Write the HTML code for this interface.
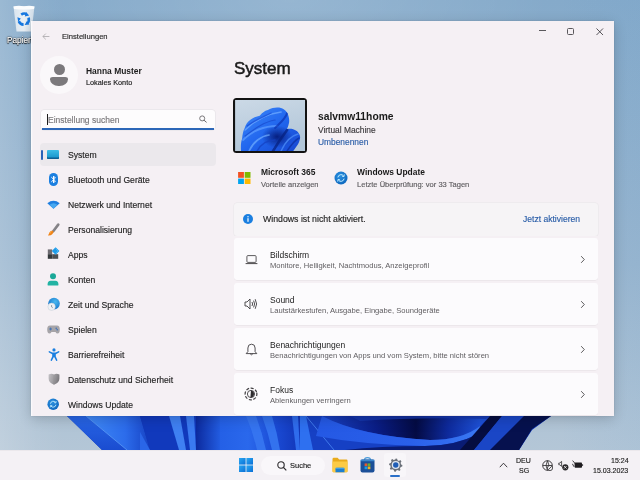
<!DOCTYPE html>
<html><head><meta charset="utf-8">
<style>
html,body{margin:0;padding:0;width:640px;height:480px;overflow:hidden;}
div.a{will-change:transform;-webkit-text-stroke:0.15px currentColor;}
body{position:relative;font-family:"Liberation Sans",sans-serif;color:#1c1c1c;background:#9ab6cf;}
.a{position:absolute;white-space:nowrap;line-height:1;}
#wall{position:absolute;left:0;top:0;width:640px;height:480px;}
#win{position:absolute;left:31px;top:21px;width:583px;height:395px;background:#f5f0f4;box-shadow:0 3px 12px rgba(0,0,0,0.18), 0 0 2px rgba(0,0,0,0.12), inset 1.2px 0 0 #fbfafc;overflow:hidden;}
.nav{position:absolute;left:0;font-size:8.6px;color:#1f1f1f;}
.card{position:absolute;left:203px;width:364px;height:42px;background:#fcfbfd;border-radius:3px;box-shadow:0 0.6px 0 rgba(0,0,0,0.07);}
.ct{position:absolute;left:36px;font-size:8.5px;color:#1c1c1c;line-height:1;white-space:nowrap;}
.cs{position:absolute;left:36px;font-size:7.6px;color:#5f5d60;line-height:1;white-space:nowrap;}
.chev{position:absolute;left:346.3px;top:17px;}
#tb{position:absolute;left:0;top:450px;width:640px;height:30px;background:#f4f1f5;border-top:1px solid #ebe8ec;box-sizing:border-box;}
</style></head>
<body>
<svg id="wall" width="640" height="480" viewBox="0 0 640 480">
  <defs>
    <linearGradient id="wbg" x1="0" y1="0" x2="0" y2="1">
      <stop offset="0" stop-color="#85aaca"/>
      <stop offset="0.55" stop-color="#9ab6cf"/>
      <stop offset="1" stop-color="#b8c9d8"/>
    </linearGradient>
    <linearGradient id="gA" x1="0" y1="0" x2="0" y2="1"><stop offset="0" stop-color="#2866e6"/><stop offset="1" stop-color="#1a4cd0"/></linearGradient>
    <linearGradient id="gB" gradientUnits="userSpaceOnUse" x1="88" y1="0" x2="150" y2="0"><stop offset="0" stop-color="#3f88f5"/><stop offset="0.6" stop-color="#2c6ceb"/><stop offset="1" stop-color="#1743c4"/></linearGradient>
    <linearGradient id="gE" gradientUnits="userSpaceOnUse" x1="220" y1="0" x2="300" y2="0"><stop offset="0" stop-color="#2460e6"/><stop offset="0.35" stop-color="#2a68ec"/><stop offset="0.7" stop-color="#1a4ad4"/><stop offset="1" stop-color="#1236b8"/></linearGradient>
    <linearGradient id="gG" x1="0" y1="0" x2="0" y2="1"><stop offset="0" stop-color="#081a7e"/><stop offset="0.5" stop-color="#0f2fb0"/><stop offset="1" stop-color="#1a46d0"/></linearGradient>
  </defs>
  <rect width="640" height="480" fill="url(#wbg)"/>
  <defs><radialGradient id="wsp" gradientUnits="userSpaceOnUse" cx="290" cy="0" r="260" gradientTransform="translate(290 0) scale(1 0.4) translate(-290 0)"><stop offset="0" stop-color="#ffffff" stop-opacity="0.14"/><stop offset="1" stop-color="#ffffff" stop-opacity="0"/></radialGradient>
  <linearGradient id="wrt" gradientUnits="userSpaceOnUse" x1="560" y1="0" x2="640" y2="0"><stop offset="0" stop-color="#4a8fd0" stop-opacity="0"/><stop offset="1" stop-color="#5a9ad0" stop-opacity="0.08"/></linearGradient></defs>
  <rect width="640" height="480" fill="url(#wsp)"/>
  <rect x="560" width="80" height="450" fill="url(#wrt)"/>
  <defs><linearGradient id="gL" x1="0" y1="0" x2="1" y2="0"><stop offset="0" stop-color="#ffffff" stop-opacity="0.18"/><stop offset="0.06" stop-color="#ffffff" stop-opacity="0.05"/><stop offset="0.1" stop-color="#ffffff" stop-opacity="0"/></linearGradient></defs><rect x="0" y="0" width="640" height="450" fill="url(#gL)"/>
  <path d="M67 416 L551 416 L532 430 L519 450 L102 450 Z" fill="#1238b8"/>
  <path d="M67 416 L86 416 L127 450 L102 450 Z" fill="url(#gA)"/>
  <path d="M86 416 L140 416 L150 450 L127 450 Z" fill="url(#gB)"/>
  <path d="M86 416 L127 450" stroke="#5a9cf8" stroke-width="0.8"/>
  <path d="M140 416 L220 416 L220 450 L150 450 Z" fill="#1139bc"/>
  <path d="M140 432 L150 450 L140 450 Z" fill="#2a66e8"/>
  <path d="M169 416 L180 416 L186 450 L179 450 Z" fill="#3f80f2"/>
  <path d="M186 416 L194 416 L196 450 L190 450 Z" fill="#3a7af0"/>
  <defs><linearGradient id="g200" gradientUnits="userSpaceOnUse" x1="196" y1="0" x2="222" y2="0"><stop offset="0" stop-color="#0c2a9e"/><stop offset="1" stop-color="#2460e6"/></linearGradient></defs><rect x="196" y="416" width="24" height="34" fill="url(#g200)"/>
  <rect x="220" y="416" width="80" height="34" fill="url(#gE)"/>
  <path d="M246 416 L256 416 Q262 432 266 450 L257 450 Q253 432 246 416 Z" fill="#3574f0"/>
  <path d="M262 416 L272 416 Q277 432 280 450 L272 450 Q268 432 262 416 Z" fill="#3372ee"/>
  <path d="M292 416 L298 416 L300 450 L296 450 Z" fill="#2f6cec"/>
  <defs>
    <linearGradient id="gN" gradientUnits="userSpaceOnUse" x1="320" y1="0" x2="480" y2="0"><stop offset="0" stop-color="#1a44c8"/><stop offset="0.35" stop-color="#0a1d86"/><stop offset="0.6" stop-color="#040b44"/><stop offset="0.8" stop-color="#0e2a9c"/><stop offset="1" stop-color="#1d50d6"/></linearGradient>
    <linearGradient id="gBand" gradientUnits="userSpaceOnUse" x1="310" y1="0" x2="480" y2="0"><stop offset="0" stop-color="#2458e4"/><stop offset="0.6" stop-color="#2a60ea"/><stop offset="1" stop-color="#3a78f2"/></linearGradient>
  </defs>
  <path d="M300 416 L551 416 L532 429 L519 450 L300 450 Z" fill="#1640c4"/>
  <path d="M300 416 L306 416 L313 450 L300 450 Z" fill="#2e70f0"/>
  <path d="M306 416 L334 450" stroke="#4a88f4" stroke-width="0.8"/>
  <path d="M322 416 Q360 436 430 440 Q462 440 480 426 L490 416 Z" fill="url(#gN)"/><path d="M350 416 L490 416 L486 419 Q420 417 360 421 Z" fill="#1638b0" opacity="0.8"/>
  <path d="M322 416 Q360 436 430 440 Q462 440 480 426 L478 434 Q455 446 425 446 Q365 445 316 436 Z" fill="url(#gBand)"/>
  <path d="M345 450 Q380 446 425 446 Q455 446 478 434 L462 450 Z" fill="#0a1c74"/>
  <path d="M460 450 L490 416 L502 416 L474 450 Z" fill="#050d40"/>
  <path d="M474 450 L502 416 L524 416 L490 450 Z" fill="#1a46c6"/>
  <path d="M490 450 L524 416 L551 416 L532 429 L519 450 Z" fill="#06114e"/>
</svg>

<!-- recycle bin -->
<svg class="a" style="left:12px;top:5px" width="24" height="28" viewBox="0 0 24 28">
  <defs><linearGradient id="rb" x1="0" y1="0" x2="1" y2="0"><stop offset="0" stop-color="#dfe8f0"/><stop offset="0.5" stop-color="#f2f6f9"/><stop offset="1" stop-color="#d5e0ea"/></linearGradient></defs>
  <path d="M1.5 1.5 L22.5 1.5 L19.5 26.5 L4.5 26.5 Z" fill="url(#rb)" opacity="0.92"/>
  <path d="M1.5 1.5 Q6 0 12 1.2 Q18 0 22.5 1.5 L22 4 Q12 5 2 4 Z" fill="#fbfcfd"/>
  <g fill="none" stroke="#1678e0" stroke-width="2.6">
    <path d="M9.2 9.6 Q12 7.6 14.6 9.2"/>
    <path d="M16.6 12.6 Q17.6 16.2 15.2 18.4"/>
    <path d="M11.6 19.6 Q8 19.4 6.8 16.2"/>
  </g>
  <path d="M14 7 L17.2 10.6 L12.8 11.4 Z M17.4 19.6 L12.6 20 L14.8 16.2 Z M5.4 12.2 L8.8 13.6 L6.2 17 Z" fill="#1678e0"/>
</svg>
<div class="a" style="left:6.5px;top:36.5px;font-size:8.2px;color:#fff;text-shadow:0 0 1px #000,0 1px 1px #000,0 0 2px rgba(0,0,0,0.8)">Papierkorb</div>

<div id="win">
  <!-- title bar -->
  <svg class="a" style="left:11px;top:11.5px" width="8" height="7" viewBox="0 0 8 7"><path d="M3.8 0.6 L0.9 3.5 L3.8 6.4 M0.9 3.5 L7.4 3.5" fill="none" stroke="#a9a7ab" stroke-width="0.8"/></svg>
  <div class="a" style="left:30.8px;top:12.2px;font-size:7.6px;color:#2a2a2a">Einstellungen</div>
  <div class="a" style="left:507.5px;top:8.8px;width:7px;height:0.9px;background:#5a585c"></div>
  <div class="a" style="left:536px;top:7px;width:5.4px;height:5.4px;border:0.9px solid #5a585c;border-radius:1.5px"></div>
  <svg class="a" style="left:565px;top:7px" width="7.5" height="7.5" viewBox="0 0 8 8"><path d="M0.5 0.5 L7.5 7.5 M7.5 0.5 L0.5 7.5" stroke="#3a383c" stroke-width="0.9"/></svg>

  <!-- profile -->
  <div class="a" style="left:9px;top:35px;width:38px;height:38px;border-radius:50%;background:#faf8fa"></div>
  <div class="a" style="left:23px;top:43.2px;width:11px;height:11px;border-radius:50%;background:#7b797c"></div>
  <div class="a" style="left:19.4px;top:56.1px;width:17.8px;height:8.7px;border-radius:3px 3px 9px 9px / 2.5px 2.5px 7px 7px;background:#7b797c"></div>
  <div class="a" style="left:55px;top:46.3px;font-size:8.45px;font-weight:bold;color:#1c1c1c;-webkit-text-stroke:0">Hanna Muster</div>
  <div class="a" style="left:55px;top:57.8px;font-size:7.3px;color:#1c1c1c">Lokales Konto</div>

  <!-- search -->
  <div class="a" style="left:10px;top:88.5px;width:174px;height:20px;background:#fdfcfd;border-radius:3px;box-shadow:0 0 0 0.5px #e2dfe3;"></div>
  <div class="a" style="left:11px;top:106.8px;width:172px;height:1.5px;background:#2c67b8"></div>
  <div class="a" style="left:15.8px;top:92.6px;width:1px;height:10.6px;background:#1c1c1c"></div>
  <div class="a" style="left:17px;top:94.8px;font-size:8.5px;color:#7a787b">Einstellung suchen</div>
  <svg class="a" style="left:167px;top:93px" width="10" height="10" viewBox="0 0 10 10"><circle cx="4.2" cy="4.4" r="2.5" fill="none" stroke="#6a686b" stroke-width="0.9"/><path d="M6 6.2 L8.6 8.4" stroke="#6a686b" stroke-width="1"/></svg>

  <!-- nav selected -->
  <div class="a" style="left:8.5px;top:121.5px;width:176px;height:23px;background:#ebe8ec;border-radius:4px"></div>
  <div class="a" style="left:9.5px;top:129px;width:2px;height:10px;background:#2a62b8;border-radius:1px"></div>

  <!-- nav icons -->
  <div class="a" style="left:16.2px;top:129.4px;width:11.8px;height:8.8px;background:linear-gradient(#3cbce6,#1590c8);border-radius:1px;box-shadow:inset 0 -1.4px 0 #0d5f94"></div>
  <svg class="a" style="left:17.5px;top:152px" width="9" height="13" viewBox="0 0 9 13"><rect x="0" y="0" width="9" height="13" rx="4.5" fill="#1b7fe0"/><path d="M2.3 4.1 L6.4 8 L4.5 9.9 L4.5 3.1 L6.4 5 L2.3 8.9" fill="none" stroke="#fff" stroke-width="1"/></svg>
  <svg class="a" style="left:16px;top:179px" width="13" height="9" viewBox="0 0 13 9"><path d="M0.3 3.2 Q6.5 -1.6 12.7 3.2 L6.5 8.8 Z" fill="#1f7fe0"/><path d="M2.6 4.8 Q6.5 1.8 10.4 4.8 L6.5 8.8 Z" fill="#47a8f0"/></svg>
  <svg class="a" style="left:16px;top:202px" width="13" height="13" viewBox="0 0 13 13"><defs><linearGradient id="bh" x1="0" y1="0" x2="1" y2="1"><stop offset="0" stop-color="#9a989c"/><stop offset="1" stop-color="#6f6d71"/></linearGradient></defs><path d="M11.2 1.6 L6.2 8.2" stroke="url(#bh)" stroke-width="2.6" stroke-linecap="round"/><path d="M5.2 7.4 Q3.2 7.6 2.4 9.6 Q1.9 11 1 12.4 Q3.8 12.6 5.2 11.2 Q6.6 9.8 6.6 8.6 Z" fill="#f08418"/><path d="M4.6 8.2 Q3.4 9 3 10.6" stroke="#ffb04a" stroke-width="0.8" fill="none"/></svg>
  <svg class="a" style="left:16px;top:226px" width="13" height="12" viewBox="0 0 13 12"><rect x="0.8" y="2.4" width="4.4" height="4.8" fill="#6e6c72"/><rect x="0.8" y="7.2" width="4.4" height="4.6" fill="#34383b"/><rect x="5.2" y="7.2" width="6" height="4.6" fill="#4b4f53"/><path d="M8.6 0.2 L12.4 4 L8.6 7.8 L4.8 4 Z" fill="#1d9be8"/><path d="M8.6 1.6 L11 4 L8.6 6.4" fill="none" stroke="#5cc8ff" stroke-width="0.6"/></svg>
  <svg class="a" style="left:16px;top:251px" width="12" height="14" viewBox="0 0 12 14"><circle cx="6" cy="4.3" r="3" fill="#1aa898"/><path d="M1.2 13.6 Q0.6 13.6 0.6 12.4 Q0.6 8.8 3.6 8.8 L8.4 8.8 Q11.4 8.8 11.4 12.4 Q11.4 13.6 10.8 13.6 Z" fill="#22b3a3"/></svg>
  <svg class="a" style="left:16px;top:276px" width="13" height="14" viewBox="0 0 13 14"><defs><radialGradient id="gz" cx="0.6" cy="0.35" r="0.7"><stop offset="0" stop-color="#49b8f0"/><stop offset="1" stop-color="#1672c8"/></radialGradient></defs><circle cx="7" cy="6.6" r="5.8" fill="url(#gz)"/><circle cx="4.6" cy="9.8" r="3.7" fill="#eef1f5" stroke="#c5ccd6" stroke-width="0.5"/><path d="M4.6 8 L4.6 10 L5.8 10.8" fill="none" stroke="#5a6878" stroke-width="0.6"/></svg>
  <svg class="a" style="left:15.5px;top:303.5px" width="13" height="9" viewBox="0 0 13 9"><path d="M3 0.5 L10 0.5 Q12.8 0.5 12.8 4.5 Q12.8 8.5 10.5 8.5 Q9.3 8.5 8.5 7 L4.5 7 Q3.7 8.5 2.5 8.5 Q0.2 8.5 0.2 4.5 Q0.2 0.5 3 0.5 Z" fill="#a6a4a8"/><path d="M2.2 4 L5 4 M3.6 2.6 L3.6 5.4" stroke="#3d6fb8" stroke-width="0.9"/><circle cx="9.2" cy="3.3" r="0.8" fill="#3d6fb8"/><circle cx="10.2" cy="4.8" r="0.8" fill="#3d6fb8"/></svg>
  <svg class="a" style="left:16.5px;top:326.5px" width="12" height="13" viewBox="0 0 12 13"><circle cx="6" cy="1.9" r="1.6" fill="#1a7fe0"/><path d="M0.6 3.4 Q1 2.8 1.6 3.2 L4.4 4.6 L7.6 4.6 L10.4 3.2 Q11 2.8 11.4 3.4 Q11.6 4 11 4.4 L7.8 6.2 L7.8 8.4 L9.4 12 Q9.6 12.8 8.8 12.9 Q8.3 12.9 8 12.4 L6 8.8 L4 12.4 Q3.7 12.9 3.2 12.9 Q2.4 12.8 2.6 12 L4.2 8.4 L4.2 6.2 L1 4.4 Q0.4 4 0.6 3.4 Z" fill="#1a7fe0"/></svg>
  <svg class="a" style="left:16.5px;top:352px" width="12" height="12" viewBox="0 0 12 12"><defs><linearGradient id="sh" x1="0" y1="0" x2="1" y2="0.3"><stop offset="0" stop-color="#c4c2c6"/><stop offset="0.5" stop-color="#a2a0a4"/><stop offset="1" stop-color="#7c7a7e"/></linearGradient></defs><path d="M6 1.4 Q8.6 0 11.4 1.6 L11.4 5.6 Q11.4 9.8 6 11.8 Q0.6 9.8 0.6 5.6 L0.6 1.6 Q3.4 0 6 1.4 Z" fill="url(#sh)"/><path d="M6 1.4 L6 11.8" stroke="#8a888c" stroke-width="0.4" opacity="0.6"/></svg>
  <svg class="a" style="left:15.6px;top:376.9px" width="12.4" height="12.4" viewBox="0 0 14 14"><defs><radialGradient id="ug" cx="0.4" cy="0.35" r="0.7"><stop offset="0" stop-color="#2a90e0"/><stop offset="1" stop-color="#0d66bd"/></radialGradient></defs><circle cx="7" cy="7" r="6.5" fill="url(#ug)"/><path d="M3.9 6.4 A3.2 3.2 0 0 1 9.6 4.9 M10.1 7.6 A3.2 3.2 0 0 1 4.4 9.1" fill="none" stroke="#c4eeff" stroke-width="1"/><path d="M10.3 3.4 L10 5.6 L8 5.2 M3.7 10.6 L4 8.4 L6 8.8" fill="none" stroke="#c4eeff" stroke-width="0.9"/></svg>

  <!-- nav text -->
  <div class="a nav" style="left:37px;top:129.8px">System</div>
  <div class="a nav" style="left:37px;top:154.8px">Bluetooth und Geräte</div>
  <div class="a nav" style="left:37px;top:179.8px">Netzwerk und Internet</div>
  <div class="a nav" style="left:37px;top:204.8px">Personalisierung</div>
  <div class="a nav" style="left:37px;top:229.8px">Apps</div>
  <div class="a nav" style="left:37px;top:254.8px">Konten</div>
  <div class="a nav" style="left:37px;top:279.8px">Zeit und Sprache</div>
  <div class="a nav" style="left:37px;top:304.8px">Spielen</div>
  <div class="a nav" style="left:37px;top:329.8px">Barrierefreiheit</div>
  <div class="a nav" style="left:37px;top:354.8px">Datenschutz und Sicherheit</div>
  <div class="a nav" style="left:37px;top:379.8px">Windows Update</div>

  <!-- main -->
  <div class="a" style="left:202.5px;top:38.8px;font-size:17px;color:#1a1a1a;-webkit-text-stroke:0.5px #1a1a1a;letter-spacing:0px">System</div>

  <div class="a" style="left:202.3px;top:77.3px;width:74.4px;height:55.2px;background:#121212;border-radius:3.5px"></div>
  <svg class="a" style="left:204.3px;top:79.4px" width="70.2" height="51" viewBox="0 0 70 51">
    <defs><linearGradient id="tg" x1="0" y1="0" x2="0.3" y2="1"><stop offset="0" stop-color="#cbd9e6"/><stop offset="1" stop-color="#b2c6d8"/></linearGradient>
    <linearGradient id="tb1" x1="0" y1="0" x2="1" y2="1"><stop offset="0" stop-color="#3f8af9"/><stop offset="0.5" stop-color="#2166ee"/><stop offset="1" stop-color="#1646d0"/></linearGradient>
    <radialGradient id="tdk" cx="0.6" cy="0.72" r="0.22"><stop offset="0" stop-color="#061f80"/><stop offset="1" stop-color="#061f80" stop-opacity="0"/></radialGradient>
    <clipPath id="tcp"><path d="M6 52 C5.5 46 5.8 42 7 38.8 C7.5 34 8 31 9.4 28.4 C10.5 25 12 22 15 20 C18 17.6 21 16.6 24.6 15.8 C28 12 30 10.8 33.3 9.8 C36 8.5 39 7.6 42 7.6 C45 7.6 47 8.3 48.6 9.3 C51 11 52.5 13 53 14.7 C54 18 54.3 20 54 22.4 C53.5 25 52.8 27 51.9 29 C54 28.6 55.8 28.6 57.4 29 C60 29.8 62 31 62.9 32.2 C64.5 34 65.2 36 65 37.7 C64.8 40 64 42 62.9 44.3 C61 47 59 50 57.4 52 Z"/></clipPath></defs>
    <rect width="70" height="51" fill="url(#tg)"/>
    <path d="M6 52 C5.5 46 5.8 42 7 38.8 C7.5 34 8 31 9.4 28.4 C10.5 25 12 22 15 20 C18 17.6 21 16.6 24.6 15.8 C28 12 30 10.8 33.3 9.8 C36 8.5 39 7.6 42 7.6 C45 7.6 47 8.3 48.6 9.3 C51 11 52.5 13 53 14.7 C54 18 54.3 20 54 22.4 C53.5 25 52.8 27 51.9 29 C54 28.6 55.8 28.6 57.4 29 C60 29.8 62 31 62.9 32.2 C64.5 34 65.2 36 65 37.7 C64.8 40 64 42 62.9 44.3 C61 47 59 50 57.4 52 Z" fill="url(#tb1)"/>
    <g clip-path="url(#tcp)">
    <rect width="70" height="51" fill="url(#tdk)"/>
    <g fill="none" stroke-linecap="round">
      <path d="M10 30 C18 22 30 14 46 12" stroke="#6aa8ff" stroke-width="1.6" opacity="0.8"/>
      <path d="M12 26 C20 20 28 17 36 13" stroke="#1a50d8" stroke-width="1.2" opacity="0.8"/>
      <path d="M8 40 C16 32 28 26 42 26" stroke="#5c9cff" stroke-width="1.8" opacity="0.75"/>
      <path d="M10 36 C18 30 28 22 40 20" stroke="#1848cc" stroke-width="1.2" opacity="0.7"/>
      <path d="M14 51 C18 42 26 36 34 35" stroke="#70aeff" stroke-width="1.6" opacity="0.7"/>
      <path d="M22 51 C26 44 32 40 40 40" stroke="#1440c0" stroke-width="1.4" opacity="0.7"/>
      <path d="M40 28 C46 22 51 18 52 13" stroke="#0f38b8" stroke-width="2" opacity="0.8"/>
      <path d="M46 51 C50 42 55 36 63 34" stroke="#4a8af6" stroke-width="1.5" opacity="0.8"/>
      <path d="M38 51 C42 44 46 38 52 30" stroke="#06207e" stroke-width="2.6" opacity="0.7"/>
      <path d="M52 51 C56 45 60 40 64 38" stroke="#0c2c9c" stroke-width="1.4" opacity="0.7"/>
    </g></g>
  </svg>

  <div class="a" style="left:287.4px;top:90.5px;font-size:10.3px;font-weight:bold;color:#1a1a1a;-webkit-text-stroke:0">salvmw11home</div>
  <div class="a" style="left:287.4px;top:104.8px;font-size:8.4px;color:#3b393c">Virtual Machine</div>
  <div class="a" style="left:287.4px;top:116.8px;font-size:8.4px;color:#2b5ea8">Umbenennen</div>

  <!-- MS365 -->
  <svg class="a" style="left:207px;top:150.8px" width="12.6" height="12.4" viewBox="0 0 13 13"><rect x="0" y="0" width="6.1" height="6.1" fill="#f25022"/><rect x="6.9" y="0" width="6.1" height="6.1" fill="#7fba00"/><rect x="0" y="6.9" width="6.1" height="6.1" fill="#00a4ef"/><rect x="6.9" y="6.9" width="6.1" height="6.1" fill="#ffb900"/></svg>
  <div class="a" style="left:230px;top:147.3px;font-size:8.45px;font-weight:bold;color:#1a1a1a;-webkit-text-stroke:0">Microsoft 365</div>
  <div class="a" style="left:230px;top:160px;font-size:7.5px;color:#5f5d60">Vorteile anzeigen</div>

  <svg class="a" style="left:303px;top:149.8px" width="14" height="14" viewBox="0 0 14 14"><defs><radialGradient id="ug" cx="0.4" cy="0.35" r="0.7"><stop offset="0" stop-color="#2a90e0"/><stop offset="1" stop-color="#0d66bd"/></radialGradient></defs><circle cx="7" cy="7" r="6.5" fill="url(#ug)"/><path d="M3.9 6.4 A3.2 3.2 0 0 1 9.6 4.9 M10.1 7.6 A3.2 3.2 0 0 1 4.4 9.1" fill="none" stroke="#c4eeff" stroke-width="1"/><path d="M10.3 3.4 L10 5.6 L8 5.2 M3.7 10.6 L4 8.4 L6 8.8" fill="none" stroke="#c4eeff" stroke-width="0.9"/></svg>
  <div class="a" style="left:326px;top:147.3px;font-size:8.45px;font-weight:bold;color:#1a1a1a;-webkit-text-stroke:0">Windows Update</div>
  <div class="a" style="left:326px;top:160px;font-size:7.55px;color:#5f5d60">Letzte Überprüfung: vor 33 Tagen</div>

  <!-- banner -->
  <div class="a" style="left:203px;top:182px;width:364px;height:32.5px;background:#f6f4f6;border-radius:3px;box-shadow:0 0 0 0.5px #e8e5e8"></div>
  <svg class="a" style="left:212px;top:193px" width="10" height="10" viewBox="0 0 10 10"><circle cx="5" cy="5" r="5" fill="#1a7fe0"/><rect x="4.4" y="4.2" width="1.2" height="3.6" fill="#fff"/><circle cx="5" cy="2.8" r="0.7" fill="#fff"/></svg>
  <div class="a" style="left:232px;top:193.5px;font-size:8.75px;color:#1f1f1f">Windows ist nicht aktiviert.</div>
  <div class="a" style="left:492px;top:193.8px;font-size:8.55px;color:#2b5ea8">Jetzt aktivieren</div>

  <!-- cards -->
  <div class="card" style="top:217px">
    <svg class="a" style="left:10.5px;top:17px" width="13" height="10" viewBox="0 0 13 10"><rect x="1.9" y="0.6" width="9.2" height="6.8" rx="1" fill="none" stroke="#4a484b" stroke-width="0.9"/><path d="M0.6 8.6 L12.4 8.6" stroke="#4a484b" stroke-width="1"/></svg>
    <div class="ct" style="top:12.5px">Bildschirm</div>
    <div class="cs" style="top:23.5px">Monitore, Helligkeit, Nachtmodus, Anzeigeprofil</div>
    <svg class="chev" width="6" height="9" viewBox="0 0 6 9"><path d="M1.2 1.2 L4.3 4.5 L1.2 7.8" fill="none" stroke="#4a484b" stroke-width="0.9"/></svg>
  </div>
  <div class="card" style="top:262px">
    <svg class="a" style="left:10px;top:15px" width="14" height="12" viewBox="0 0 14 12"><path d="M1 4 L3 4 L6 1 L6 11 L3 8 L1 8 Z" fill="none" stroke="#3e3c3f" stroke-width="0.9"/><path d="M8 4 Q9.2 6 8 8 M9.6 2.6 Q11.6 6 9.6 9.4 M11.2 1.2 Q14 6 11.2 10.8" fill="none" stroke="#3e3c3f" stroke-width="0.9"/></svg>
    <div class="ct" style="top:12.5px">Sound</div>
    <div class="cs" style="top:23.5px">Lautstärkestufen, Ausgabe, Eingabe, Soundgeräte</div>
    <svg class="chev" width="6" height="9" viewBox="0 0 6 9"><path d="M1.2 1.2 L4.3 4.5 L1.2 7.8" fill="none" stroke="#4a484b" stroke-width="0.9"/></svg>
  </div>
  <div class="card" style="top:307px">
    <svg class="a" style="left:10.5px;top:14.5px" width="13" height="13" viewBox="0 0 13 13"><path d="M6.5 1.2 Q2.9 1.2 2.9 5 L2.9 8.6 L1.2 10.6 L11.8 10.6 L10.1 8.6 L10.1 5 Q10.1 1.2 6.5 1.2 Z" fill="none" stroke="#3e3c3f" stroke-width="0.9"/><path d="M5.2 10.8 Q6.5 12.8 7.8 10.8" fill="none" stroke="#3e3c3f" stroke-width="0.9"/></svg>
    <div class="ct" style="top:12.5px">Benachrichtigungen</div>
    <div class="cs" style="top:23.5px">Benachrichtigungen von Apps und vom System, bitte nicht stören</div>
    <svg class="chev" width="6" height="9" viewBox="0 0 6 9"><path d="M1.2 1.2 L4.3 4.5 L1.2 7.8" fill="none" stroke="#4a484b" stroke-width="0.9"/></svg>
  </div>
  <div class="card" style="top:352px">
    <svg class="a" style="left:10px;top:14px" width="14" height="14" viewBox="0 0 14 14"><circle cx="7" cy="7" r="5.9" fill="none" stroke="#3e3c3f" stroke-width="1.2" stroke-dasharray="3 1.63" transform="rotate(-10 7 7)"/><circle cx="7" cy="7" r="3.6" fill="none" stroke="#3e3c3f" stroke-width="0.9"/><path d="M7 3.4 A3.6 3.6 0 0 1 6.4 10.55 Z" fill="#2e2c2f"/></svg>
    <div class="ct" style="top:12.5px">Fokus</div>
    <div class="cs" style="top:23.5px">Ablenkungen verringern</div>
    <svg class="chev" width="6" height="9" viewBox="0 0 6 9"><path d="M1.2 1.2 L4.3 4.5 L1.2 7.8" fill="none" stroke="#4a484b" stroke-width="0.9"/></svg>
  </div>
</div>

<!-- taskbar -->
<div id="tb"></div>
<svg class="a" style="left:239px;top:458.4px" width="14" height="14" viewBox="0 0 14 14"><defs><linearGradient id="wl" x1="0" y1="0" x2="1" y2="1"><stop offset="0" stop-color="#2aa8f2"/><stop offset="1" stop-color="#0a6fd6"/></linearGradient></defs><rect x="0" y="0" width="6.6" height="6.6" fill="url(#wl)"/><rect x="7.4" y="0" width="6.6" height="6.6" fill="url(#wl)"/><rect x="0" y="7.4" width="6.6" height="6.6" fill="url(#wl)"/><rect x="7.4" y="7.4" width="6.6" height="6.6" fill="url(#wl)"/></svg>
<div class="a" style="left:261px;top:456px;width:64px;height:18.5px;border-radius:10px;background:#f9f7fa"></div>
<svg class="a" style="left:277px;top:460.8px" width="10" height="10" viewBox="0 0 10 10"><circle cx="4" cy="4" r="3.2" fill="none" stroke="#2a282b" stroke-width="1.1"/><path d="M6.4 6.4 L9.3 9.3" stroke="#2a282b" stroke-width="1.2"/></svg>
<div class="a" style="left:289.8px;top:462px;font-size:7.5px;color:#1c1c1c">Suche</div>
<svg class="a" style="left:332px;top:457px" width="16" height="16" viewBox="0 0 16 16"><path d="M0.5 2.2 Q0.5 0.8 1.8 0.8 L5.6 0.8 L7.2 2.4 L14.4 2.4 Q15.5 2.4 15.5 3.6 L15.5 14 Q15.5 15.2 14.4 15.2 L1.6 15.2 Q0.5 15.2 0.5 14 Z" fill="#e9ab1c"/><path d="M0.5 4.6 L15.5 4.6 L15.5 14 Q15.5 15.2 14.4 15.2 L1.6 15.2 Q0.5 15.2 0.5 14 Z" fill="#fccb45"/><path d="M3.5 15.2 L3.5 12.2 Q3.5 10.8 4.8 10.8 L11.2 10.8 Q12.5 10.8 12.5 12.2 L12.5 15.2 Z" fill="#1c7fd0"/><rect x="3.5" y="10.8" width="9" height="1" fill="#4aa8ec"/></svg>
<svg class="a" style="left:360px;top:457px" width="15" height="16" viewBox="0 0 15 16"><path d="M4.4 3.2 Q4.4 0.6 7.5 0.6 Q10.6 0.6 10.6 3.2" fill="none" stroke="#4a9ad8" stroke-width="1.1"/><rect x="0.5" y="2.6" width="14" height="12.8" rx="2" fill="#1b4f98"/><rect x="0.5" y="2.6" width="14" height="1.6" rx="0.8" fill="#3a86cc"/><rect x="4.6" y="6.4" width="2.7" height="2.7" fill="#e05a30"/><rect x="7.7" y="6.4" width="2.7" height="2.7" fill="#6aae30"/><rect x="4.6" y="9.5" width="2.7" height="2.7" fill="#1a9ee0"/><rect x="7.7" y="9.5" width="2.7" height="2.7" fill="#f0b020"/></svg>
<div class="a" style="left:384px;top:453px;width:22px;height:24px;border-radius:3px;background:#f8f6f9"></div>
<svg class="a" style="left:387.5px;top:457.5px" width="15.5" height="14" viewBox="0 0 16 16"><path d="M8 0.5 L9.6 0.8 L10 2.6 L11.7 3.4 L13.3 2.4 L14.5 3.9 L13.6 5.5 L14.1 7.3 L15.6 8 L15.4 9.8 L13.7 10.4 L12.8 12 L13.4 13.8 L11.9 14.9 L10.5 13.8 L8.6 14.2 L8 15.6 L6.2 15.4 L5.7 13.7 L4.1 12.8 L2.3 13.4 L1.2 11.9 L2.2 10.5 L1.8 8.6 L0.4 8 L0.6 6.2 L2.3 5.7 L3.2 4.1 L2.6 2.3 L4.1 1.2 L5.5 2.2 L7.4 1.8 Z" fill="#6b7079"/><circle cx="8" cy="8" r="4.6" fill="#dfe7f0"/><circle cx="8" cy="8" r="3.1" fill="#1f5db5"/></svg>
<div class="a" style="left:389.8px;top:474.6px;width:10px;height:1.9px;border-radius:1px;background:#2a6fc8"></div>

<svg class="a" style="left:498.5px;top:462px" width="9" height="6" viewBox="0 0 9 6"><path d="M0.8 5.2 L4.5 1.2 L8.2 5.2" fill="none" stroke="#2a282b" stroke-width="0.9"/></svg>
<div class="a" style="left:516px;top:457.2px;font-size:7px;color:#1c1c1c">DEU</div>
<div class="a" style="left:518.5px;top:467px;font-size:7px;color:#1c1c1c">SG</div>
<svg class="a" style="left:542px;top:460px" width="11" height="11" viewBox="0 0 11 11"><circle cx="5.5" cy="5.5" r="4.8" fill="none" stroke="#2a282b" stroke-width="0.9"/><path d="M0.7 5.5 L10.3 5.5 M5.5 0.7 Q2.5 5.5 5.5 10.3 M5.5 0.7 Q8.5 5.5 5.5 10.3" fill="none" stroke="#2a282b" stroke-width="0.8"/><circle cx="8" cy="8" r="2.6" fill="#f1eef2" stroke="#2a282b" stroke-width="0.8"/><path d="M6.5 9.5 L9.5 6.5" stroke="#2a282b" stroke-width="0.8"/></svg>
<svg class="a" style="left:557.5px;top:460px" width="12" height="11" viewBox="0 0 12 11"><path d="M0.8 3 L1.8 3 L3.6 1.4 L3.6 6.4 L1.8 4.8 L0.8 4.8 Z" fill="none" stroke="#2a282b" stroke-width="0.8"/><circle cx="7.3" cy="7.3" r="3.1" fill="#2a282b"/><path d="M6 6 L8.6 8.6 M8.6 6 L6 8.6" stroke="#f4f1f5" stroke-width="0.8"/></svg>
<svg class="a" style="left:572px;top:460px" width="12" height="9" viewBox="0 0 12 9"><rect x="2.6" y="2.4" width="7.4" height="5.4" rx="0.8" fill="#1e1c1f"/><path d="M10 4 L11.4 5.1 L10 6.2 Z" fill="#1e1c1f"/><path d="M0.6 0.6 L3.2 3.6 M0.4 3.8 L2 6.8" stroke="#2a282b" stroke-width="0.9"/></svg>
<div class="a" style="left:610.5px;top:456.5px;font-size:7.03px;color:#1c1c1c">15:24</div>
<div class="a" style="left:592.8px;top:466.6px;font-size:7.05px;color:#1c1c1c">15.03.2023</div>
</body></html>
